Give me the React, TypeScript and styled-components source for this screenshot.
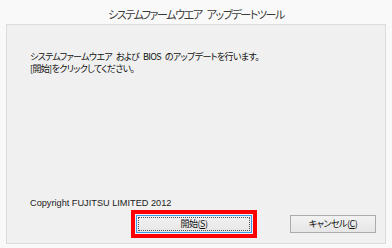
import React from 'react'
import styled, { createGlobalStyle } from 'styled-components'

const GlobalStyle = createGlobalStyle`
  html, body {
    margin: 0;
    padding: 0;
    background: #fafafa;
  }
  body {
    font-family: "Noto Sans CJK JP", "Noto Sans", sans-serif;
  }
`

const Window = styled.div`
  width: 392px;
  height: 248px;
  display: flex;
  flex-direction: column;
  background: #f9f9f9;
  box-sizing: border-box;
`

const Title = styled.div`
  padding: 7px 0 3px;
  line-height: 14px;
  text-align: center;
  font-size: 11px;
  letter-spacing: -1.4px;
  word-spacing: 4px;
  color: #3a3a3a;
  font-feature-settings: 'palt';
`

const Panel = styled.div`
  flex: 1;
  margin: 0 6px 4px;
  display: flex;
  flex-direction: column;
  background: #f0f0f0;
  border: 1px solid #dcdcdc;
  padding: 26px 9px 5px 23px;
`

const Message = styled.p`
  margin: 0;
  font-size: 9px;
  letter-spacing: -0.65px;
  word-spacing: 2.5px;
  line-height: 11.5px;
  color: #111;
  font-feature-settings: 'palt';
`

const Spacer = styled.div`
  flex: 1;
`

const Copyright = styled.div`
  font-family: "Liberation Sans", Arial, sans-serif;
  font-size: 9.2px;
  line-height: 12px;
  color: #222;
`

const ButtonRow = styled.div`
  display: flex;
  justify-content: flex-end;
  align-items: center;
  gap: 33px;
  margin-top: 1px;
`

const Highlight = styled.div`
  border: 4px solid #f00;
  padding: 1px;
  display: flex;
`

const Button = styled.button<{ $primary?: boolean; $width: number }>`
  width: ${p => p.$width}px;
  height: 18px;
  padding: 0;
  box-sizing: border-box;
  border: 1px solid ${p => (p.$primary ? '#3c9be6' : '#acacac')};
  background: linear-gradient(#f2f2f2, #e6e6e6);
  font-family: "Noto Sans CJK JP", "Noto Sans", sans-serif;
  font-size: 9px;
  letter-spacing: -0.5px;
  line-height: 14px;
  color: #111;
  font-feature-settings: 'palt';
  display: flex;
  align-items: center;
  justify-content: center;
  outline: ${p => (p.$primary ? '1px dotted #555' : 'none')};
  outline-offset: -3px;
`

const Key = styled.span`
  text-decoration: underline;
`

export default function App() {
  return (
    <>
      <GlobalStyle />
      <Window>
        <Title>システムファームウエア アップデートツール</Title>
        <Panel>
          <Message>
            システムファームウエア および BIOS のアップデートを行います。
            <br />
            [開始]をクリックしてください。
          </Message>
          <Spacer />
          <Copyright>Copyright FUJITSU LIMITED 2012</Copyright>
          <ButtonRow>
            <Highlight>
              <Button $primary $width={116}>
                開始(<Key>S</Key>)
              </Button>
            </Highlight>
            <Button $width={86}>
              キャンセル(<Key>C</Key>)
            </Button>
          </ButtonRow>
        </Panel>
      </Window>
    </>
  )
}
